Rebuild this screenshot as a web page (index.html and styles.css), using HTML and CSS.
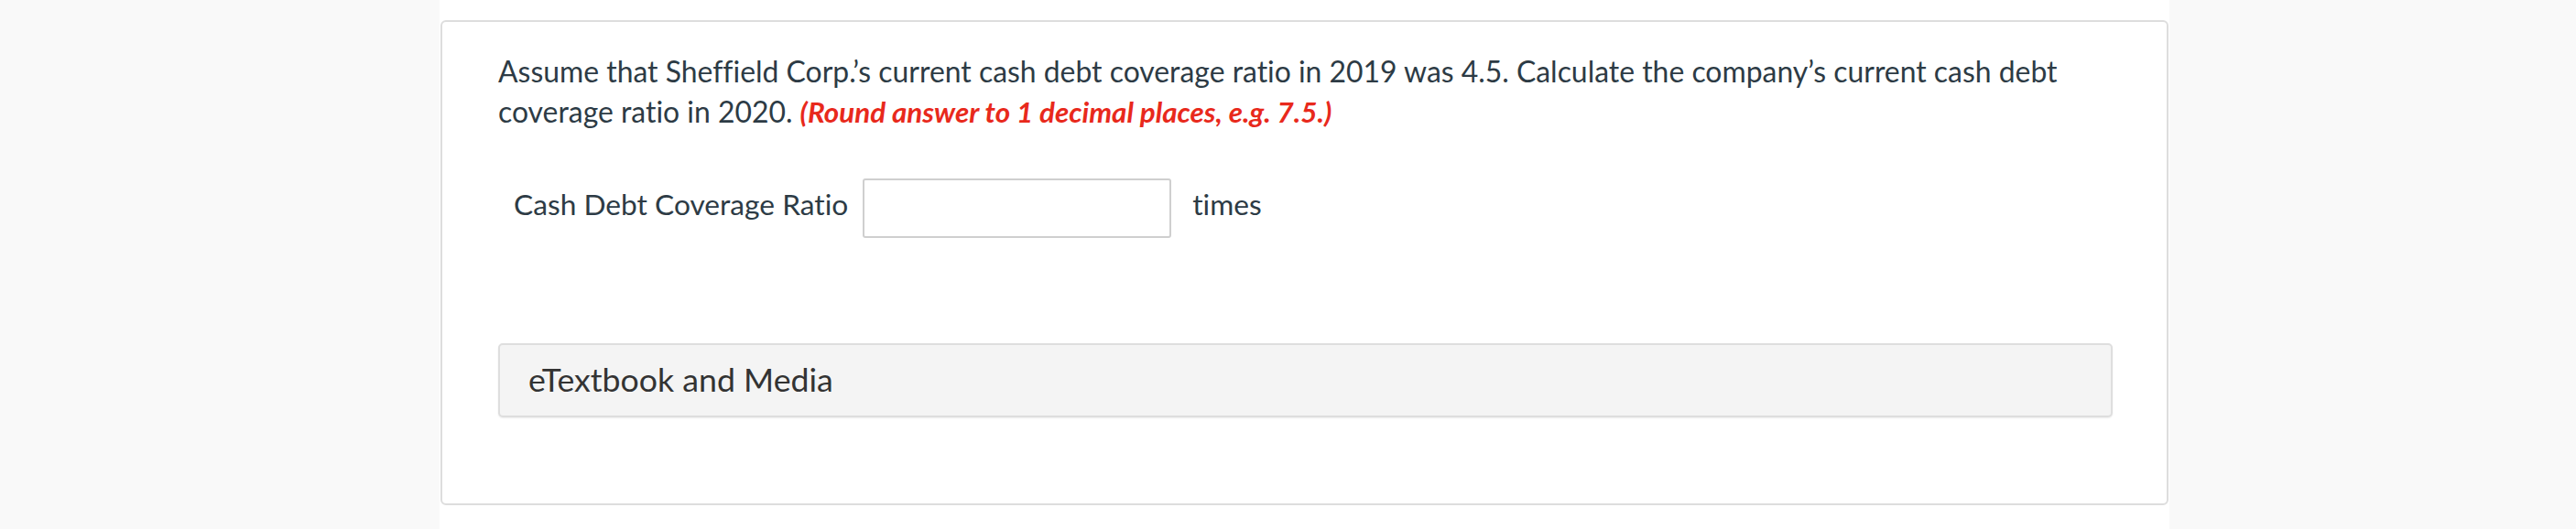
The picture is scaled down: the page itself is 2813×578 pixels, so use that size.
FILE: index.html
```html
<!DOCTYPE html>
<html lang="en">
<head>
<meta charset="utf-8">
<title>Question</title>
<link rel="stylesheet" href="styles.css">
</head>
<body>
<div class="page">
  <main class="column">
    <section class="card">
      <p class="question">Assume that Sheffield Corp.’s current cash debt coverage ratio in 2019 was 4.5. Calculate the company’s current cash debt coverage ratio in 2020. <em class="hint">(Round answer to 1 decimal places, e.g. 7.5.)</em></p>
      <div class="answer-row">
        <label class="answer-label" for="ratio">Cash Debt Coverage Ratio</label>
        <input class="answer-input" id="ratio" type="text">
        <span class="answer-unit">times</span>
      </div>
      <div class="media">eTextbook and Media</div>
    </section>
  </main>
</div>
</body>
</html>
```

FILE: styles.css
```css
html, body {
  margin: 0;
  padding: 0;
}
body {
  background: #f9f9f9;
  font-family: Lato, "Open Sans", sans-serif;
  color: #2d3b45;
  font-variant-ligatures: none;
}
.page {
  min-height: 100vh;
}
.column {
  margin-left: 480px;
  width: 1889px;
  min-height: 100vh;
  background: #ffffff;
  padding-top: 22px;
  box-sizing: border-box;
}
.card {
  margin: 0 1px;
  border: 2px solid #dddddd;
  border-radius: 6px;
  padding: 32px 59px 94px 61px;
  box-sizing: border-box;
  background: #fff;
}
.question {
  margin: 0;
  font-size: 31.9px;
  line-height: 44px;
}
.hint {
  color: #e8291c;
  font-weight: 700;
  font-style: italic;
  font-size: 31.4px;
}
.answer-row {
  display: flex;
  align-items: flex-start;
  margin-top: 51px;
  padding-left: 17px;
}
.answer-label, .answer-unit {
  font-size: 31.7px;
  line-height: 44px;
  padding-top: 6px;
}
.answer-input {
  margin: 0 23px 0 16px;
  width: 337px;
  height: 65px;
  box-sizing: border-box;
  border: 2px solid #cfcfcf;
  border-radius: 3px;
  background: #fff;
  font: inherit;
}
.media {
  margin-top: 115px;
  height: 81px;
  box-sizing: border-box;
  background: #f4f4f4;
  border: 2px solid #dedede;
  border-radius: 5px;
  box-shadow: 0 1px 2px rgba(0,0,0,0.08);
  padding: 16px 31px 0;
  font-size: 35.7px;
  line-height: 44px;
  color: #333333;
}
```
